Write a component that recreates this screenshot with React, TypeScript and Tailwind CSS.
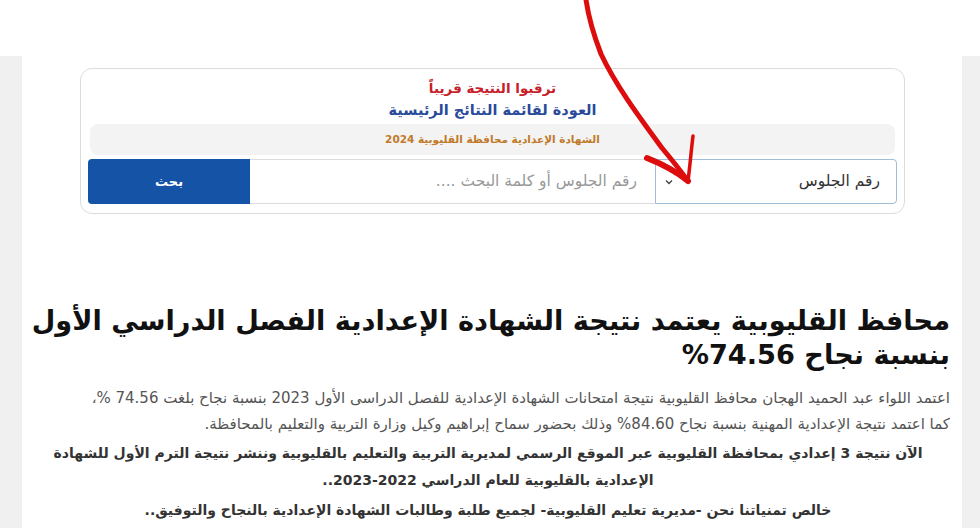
import React from "react";

const font = { fontFamily: '"DejaVu Sans", "Noto Sans", sans-serif' };

function Arrow() {
  return (
    <svg
      className="absolute left-0 top-0 pointer-events-none"
      width="980"
      height="528"
      viewBox="0 0 980 528"
    >
      <path
        d="M586 0 C589 20 594 36 601 54 C616 86 640 118 662 148 C672 160 680 170 688 181"
        stroke="#dd0d0d"
        strokeWidth="5"
        fill="none"
        strokeLinecap="round"
      />
      <path
        d="M647 158 C662 164 676 171 688 181"
        stroke="#dd0d0d"
        strokeWidth="6"
        fill="none"
        strokeLinecap="round"
      />
      <path
        d="M693 136 C691 152 690 166 688 181"
        stroke="#dd0d0d"
        strokeWidth="3.5"
        fill="none"
        strokeLinecap="round"
      />
    </svg>
  );
}

export default function App() {
  return (
    <div className="relative w-[980px] h-[528px] overflow-hidden bg-white" style={font} dir="ltr">
      <div className="h-[56px] bg-white" />
      <div className="flex flex-row h-[472px]">
        <div className="w-[22px] bg-[#f0f0f0]" />
        <div className="flex-1 bg-white flex flex-col items-start">
          <div className="mt-[12px] ml-[58px] w-[825px] h-[146px] border border-[#dcdcdc] rounded-xl flex flex-col items-center pt-[8px] px-[9px]" dir="rtl">
            <div className="text-[13.5px] font-bold text-[#c8202a] leading-[22px]">ترقبوا النتيجة قريباً</div>
            <div className="text-[14.5px] font-bold text-[#2a4a9a] leading-[22px]">العودة لقائمة النتائج الرئيسية</div>
            <div className="mt-[3px] w-full h-[31px] rounded-lg bg-[#f3f3f3] flex items-center justify-center text-[10.5px] font-bold text-[#c07a2a]">
              الشهادة الإعدادية محافظة القليوبية 2024
            </div>
            <div className="mt-[4px] w-[809px] h-[45px] flex flex-row">
              <div className="w-[242px] h-full border border-[#9fbcd8] rounded-r-[4px] flex items-center justify-between pr-[16px] pl-[8px] text-[#333]">
                <span className="text-[15.5px]">رقم الجلوس</span>
                <svg width="10" height="10" viewBox="0 0 10 10">
                  <path d="M2 3.5 L5 6.5 L8 3.5" stroke="#444" strokeWidth="1.4" fill="none" />
                </svg>
              </div>
              <div className="w-[405px] h-full border-y border-[#dcdcdc] flex items-center pr-[18px] text-[15.5px] text-[#999]">
                رقم الجلوس أو كلمة البحث ....
              </div>
              <div className="flex-1 h-full rounded-l-[4px] bg-[#1553a6] flex items-center justify-center text-white text-[13px] font-bold">
                بحث
              </div>
            </div>
          </div>
          <div className="mt-[90px] w-full pr-[12px] pl-[4px]" dir="rtl">
            <h1 className="text-[27.2px] font-bold text-[#111] leading-[34px]">
              محافظ القليوبية يعتمد نتيجة الشهادة الإعدادية الفصل الدراسي الأول
              <br />
              بنسبة نجاح 74.56%
            </h1>
            <p className="mt-[13px] text-[15px] text-[#555] leading-[26px]">
              اعتمد اللواء عبد الحميد الهجان محافظ القليوبية نتيجة امتحانات الشهادة الإعدادية للفصل الدراسى الأول 2023 بنسبة نجاح بلغت 74.56 %،
              <br />
              كما اعتمد نتيجة الإعدادية المهنية بنسبة نجاح 84.60% وذلك بحضور سماح إبراهيم وكيل وزارة التربية والتعليم بالمحافظة.
            </p>
            <p className="mt-[3px] text-center text-[14px] font-bold text-[#333] leading-[27px]">
              الآن نتيجة 3 إعدادي بمحافظة القليوبية عبر الموقع الرسمي لمديرية التربية والتعليم بالقليوبية وننشر نتيجة الترم الأول للشهادة
              <br />
              الإعدادية بالقليوبية للعام الدراسي 2022-2023..
            </p>
            <p className="mt-[3px] text-center text-[14px] font-bold text-[#333] leading-[27px]">
              خالص تمنياتنا نحن -مديرية تعليم القليوبية- لجميع طلبة وطالبات الشهادة الإعدادية بالنجاح والتوفيق..
            </p>
          </div>
        </div>
        <div className="w-[18px] bg-[#f0f0f0]" />
      </div>
      <Arrow />
    </div>
  );
}
